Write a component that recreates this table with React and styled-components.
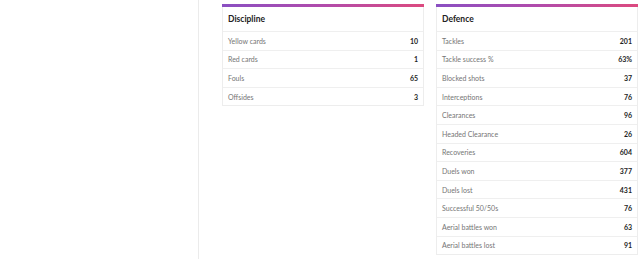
import React from "react";
import styled, { createGlobalStyle } from "styled-components";

const Global = createGlobalStyle`
  html, body { margin: 0; padding: 0; background: #fff; }
  body { font-family: Lato, "Open Sans", sans-serif; }
`;

const Page = styled.div`
  display: flex;
  height: 259px;
  overflow: hidden;
`;

const Sidebar = styled.div`
  width: 198px;
  flex: none;
  border-right: 1px solid #ebebeb;
`;

const Main = styled.div`
  display: flex;
  align-items: flex-start;
  gap: 12px;
  padding: 4px 0 0 23px;
`;

const Card = styled.section`
  width: 202px;
  flex: none;
  box-sizing: border-box;
  border: 1px solid #ededed;
  border-top: none;
  background: #fff;
`;

const Bar = styled.div`
  height: 3px;
  margin: 0 -1px;
  background: linear-gradient(90deg, #8a4fc2 0%, #b14bab 50%, #dc4a7f 100%);
`;

const Title = styled.h3`
  margin: 0;
  height: 24px;
  display: flex;
  align-items: center;
  padding: 0 5px;
  font-size: 8.5px;
  font-weight: 700;
  color: #222;
`;

const Row = styled.div`
  display: flex;
  justify-content: space-between;
  align-items: center;
  height: 17.6px;
  padding: 0 5px;
  border-top: 1px solid #efefef;
  font-size: 7px;
`;

const Label = styled.span`
  color: #757575;
`;

const Value = styled.span`
  color: #1e1e1e;
  font-weight: 700;
`;

const discipline = [
  ["Yellow cards", "10"],
  ["Red cards", "1"],
  ["Fouls", "65"],
  ["Offsides", "3"],
];

const defence = [
  ["Tackles", "201"],
  ["Tackle success %", "63%"],
  ["Blocked shots", "37"],
  ["Interceptions", "76"],
  ["Clearances", "96"],
  ["Headed Clearance", "26"],
  ["Recoveries", "604"],
  ["Duels won", "377"],
  ["Duels lost", "431"],
  ["Successful 50/50s", "76"],
  ["Aerial battles won", "63"],
  ["Aerial battles lost", "91"],
];

function StatCard({ title, rows }) {
  return (
    <Card>
      <Bar />
      <Title>{title}</Title>
      {rows.map(([l, v]) => (
        <Row key={l}>
          <Label>{l}</Label>
          <Value>{v}</Value>
        </Row>
      ))}
    </Card>
  );
}

export default function App() {
  return (
    <>
      <Global />
      <Page>
        <Sidebar />
        <Main>
          <StatCard title="Discipline" rows={discipline} />
          <StatCard title="Defence" rows={defence} />
        </Main>
      </Page>
    </>
  );
}
